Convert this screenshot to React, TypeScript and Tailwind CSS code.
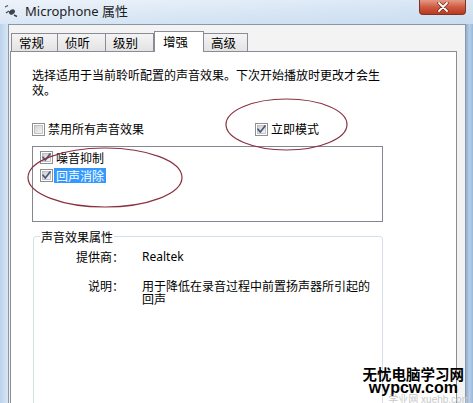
import React from "react";

function Check({ checked }: { checked: boolean }) {
  return (
    <svg width="13" height="13" viewBox="0 0 13 13" className="shrink-0">
      <defs>
        <linearGradient id="cbg" x1="0" y1="0" x2="1" y2="1">
          <stop offset="0" stopColor="#cfcfcf" />
          <stop offset="1" stopColor="#f6f6f6" />
        </linearGradient>
      </defs>
      <rect x="0.5" y="0.5" width="12" height="12" fill="#fff" stroke="#8e8f8f" />
      <rect x="2.5" y="2.5" width="8" height="8" fill="url(#cbg)" stroke="#b6b6b6" strokeWidth="0.8" />
      {checked && (
        <path d="M3 6.2 L5.3 9 L10 3" fill="none" stroke="#4a5b7d" strokeWidth="1.8" strokeLinecap="round" strokeLinejoin="round" />
      )}
    </svg>
  );
}

function Tab({ label, w, selected }: { label: string; w: string; selected?: boolean }) {
  if (selected) {
    return (
      <div className={`${w} h-[21px] -mb-px relative z-10 bg-white border border-b-0 border-[#898c95] pl-[8px] leading-[19px] text-[12.5px] text-black`}>
        {label}
      </div>
    );
  }
  return (
    <div className={`${w} h-[18px] bg-gradient-to-b from-[#f4f4f4] to-[#e3e3e3] border border-b-0 border-[#898c95] -ml-px pl-[7px] leading-[18px] text-[12.5px] text-black`}>
      {label}
    </div>
  );
}

export default function App() {
  return (
    <div className="w-[473px] h-[403px] relative overflow-hidden bg-[#c9dcef] font-['Noto_Sans_CJK_SC',sans-serif] text-black">
      {/* Title bar */}
      <div className="h-[24px] flex items-start bg-gradient-to-br from-[#eef3fa] via-[#d9e7f5] to-[#c9dcf0]">
        <svg width="14" height="14" viewBox="0 0 14 14" className="ml-[4px] mt-[4px]">
          <path d="M1 3 L4 1.5" stroke="#4a4f57" strokeWidth="1.2" />
          <path d="M2 9 L5 7" stroke="#4a4f57" strokeWidth="1.4" />
          <ellipse cx="8" cy="8" rx="3.2" ry="2.3" transform="rotate(-35 8 8)" fill="#3d434b" />
          <path d="M10 11 L13 12.5" stroke="#3d434b" strokeWidth="1.5" />
        </svg>
        <div className="ml-[7px] mt-[2px] text-[13px] leading-[18px] font-['Noto_Sans','Noto_Sans_CJK_SC',sans-serif] text-[#1e1e1e]">
          Microphone 属性
        </div>
        <div className="ml-auto mr-[7px] w-[47px] h-[15px] rounded-b-[4px] border border-t-0 border-[#7a3328] bg-gradient-to-b from-[#e39a86] via-[#cf5a41] to-[#b9391f] flex items-center justify-center">
          <svg width="12" height="10" viewBox="0 0 12 10">
            <path d="M2 1 L10 9 M10 1 L2 9" stroke="#6b2a20" strokeWidth="3.2" strokeLinecap="round" />
            <path d="M2 1 L10 9 M10 1 L2 9" stroke="#ffffff" strokeWidth="1.8" strokeLinecap="round" />
          </svg>
        </div>
      </div>

      {/* Body */}
      <div className="flex h-[400px]">
        <div className="w-[8px] bg-gradient-to-r from-[#bcd2ea] to-[#d6e6f6]" />
        <div className="w-[458px] bg-[#f3f3f3] border-t border-l border-r border-[#8a97a6] pl-[1px] pr-[8px] pt-[6px] flex flex-col">
          <div className="flex items-end h-[20px] ml-[2px]">
            <Tab label="常规" w="w-[47px]" />
            <Tab label="侦听" w="w-[49px]" />
            <Tab label="级别" w="w-[49px]" />
            <Tab label="增强" w="w-[50px]" selected />
            <Tab label="高级" w="w-[45px]" />
          </div>
          <div className="flex-1 bg-white border border-[#898c95] flex flex-col pl-[21px] pt-[15px] text-[12px]">
            <p className="w-[354px] leading-[15px]">
              选择适用于当前聆听配置的声音效果。下次开始播放时更改才会生效。
            </p>
            <div className="flex items-center h-[16px] mt-[24px]">
              <div className="w-[223px] flex items-center gap-[3px]">
                <Check checked={false} />
                <span className="leading-[16px]">禁用所有声音效果</span>
              </div>
              <div className="flex items-center gap-[3px]">
                <Check checked />
                <span className="leading-[16px]">立即模式</span>
              </div>
            </div>
            <div className="mt-[9px] w-[351px] h-[76px] border border-[#828790] pl-[7px] pt-[1px]">
              <div className="h-[18px] flex items-center">
                <Check checked />
                <span className="ml-[1px] px-[2px] leading-[15px]">噪音抑制</span>
              </div>
              <div className="h-[18px] flex items-center">
                <Check checked />
                <span className="ml-[1px] px-[2px] h-[15px] leading-[15px] bg-[#3399ff] text-white">回声消除</span>
              </div>
            </div>
            <fieldset className="mt-[7px] ml-[1px] w-[350px] flex-1 border border-[#d5dfe5] rounded-[3px]">
              <legend className="ml-[6px] px-[1px] leading-[15px]">声音效果属性</legend>
              <div className="grid grid-cols-[90px_1fr] gap-x-[18px] gap-y-[15px] pt-[5px]">
                <div className="text-right leading-[15px]">提供商：</div>
                <div className="leading-[15px] font-['Noto_Sans','Noto_Sans_CJK_SC',sans-serif]">Realtek</div>
                <div className="text-right leading-[13px]">说明：</div>
                <div className="w-[232px] leading-[13px]">用于降低在录音过程中前置扬声器所引起的回声</div>
              </div>
            </fieldset>
          </div>
        </div>
        <div className="w-[7px] bg-gradient-to-r from-[#8fb0d3] via-[#b7cde6] to-[#9ab8d8]" />
      </div>

      {/* Annotation ellipses */}
      <svg className="absolute left-0 top-0 pointer-events-none" width="473" height="403">
        <ellipse cx="286.5" cy="124.5" rx="60.5" ry="25.5" fill="none" stroke="#8a3040" strokeWidth="1.2" />
        <ellipse cx="105" cy="177.5" rx="77" ry="29.5" fill="none" stroke="#8a3040" strokeWidth="1.2" />
      </svg>

      {/* Watermark */}
      <div className="absolute right-[9px] top-[366px] flex flex-col items-end">
        <div className="text-[14.5px] leading-[16px] font-bold text-black font-['Noto_Sans_CJK_SC',sans-serif]">无忧电脑学习网</div>
        <div className="mr-[6px] text-[16px] leading-[12px] font-bold text-black font-['Liberation_Sans',sans-serif]">wypcw.com</div>
        <div className="-mr-[6px] mt-[1px] text-[10px] leading-[9px] text-[#c8c8c8] font-['Liberation_Sans','Noto_Sans_CJK_SC',sans-serif] whitespace-nowrap">
          学业网 xuehb.com
        </div>
      </div>
    </div>
  );
}
